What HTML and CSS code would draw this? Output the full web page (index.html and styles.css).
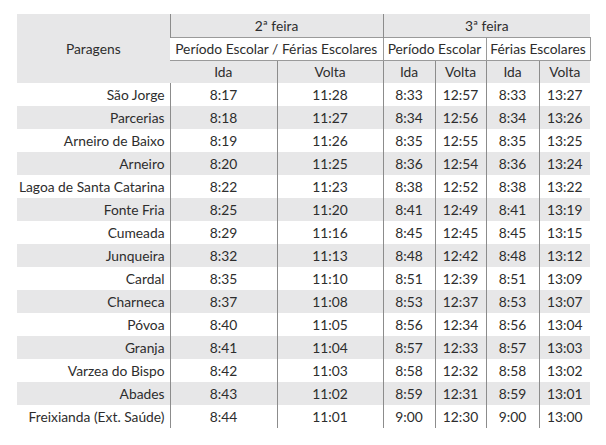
FILE: index.html
```html
<!DOCTYPE html>
<html>
<head>
<meta charset="utf-8">
<link rel="stylesheet" href="styles.css">
</head>
<body>
<table class="timetable">
<colgroup>
<col class="c-stop"><col class="c-wide"><col class="c-wide2"><col class="c-n1"><col class="c-n2"><col class="c-n3"><col class="c-n4">
</colgroup>
<thead>
<tr class="h-day">
<th rowspan="3" class="stop-head">Paragens</th>
<th colspan="2" class="day">2ª feira</th>
<th colspan="4" class="day">3ª feira</th>
</tr>
<tr class="h-period">
<th colspan="2">Período Escolar / Férias Escolares</th>
<th colspan="2">Período Escolar</th>
<th colspan="2">Férias Escolares</th>
</tr>
<tr class="h-dir">
<th>Ida</th><th>Volta</th><th>Ida</th><th>Volta</th><th>Ida</th><th>Volta</th>
</tr>
</thead>
<tbody>
<tr><td class="stop">São Jorge</td><td>8:17</td><td>11:28</td><td>8:33</td><td>12:57</td><td>8:33</td><td>13:27</td></tr>
<tr><td class="stop">Parcerias</td><td>8:18</td><td>11:27</td><td>8:34</td><td>12:56</td><td>8:34</td><td>13:26</td></tr>
<tr><td class="stop">Arneiro de Baixo</td><td>8:19</td><td>11:26</td><td>8:35</td><td>12:55</td><td>8:35</td><td>13:25</td></tr>
<tr><td class="stop">Arneiro</td><td>8:20</td><td>11:25</td><td>8:36</td><td>12:54</td><td>8:36</td><td>13:24</td></tr>
<tr><td class="stop">Lagoa de Santa Catarina</td><td>8:22</td><td>11:23</td><td>8:38</td><td>12:52</td><td>8:38</td><td>13:22</td></tr>
<tr><td class="stop">Fonte Fria</td><td>8:25</td><td>11:20</td><td>8:41</td><td>12:49</td><td>8:41</td><td>13:19</td></tr>
<tr><td class="stop">Cumeada</td><td>8:29</td><td>11:16</td><td>8:45</td><td>12:45</td><td>8:45</td><td>13:15</td></tr>
<tr><td class="stop">Junqueira</td><td>8:32</td><td>11:13</td><td>8:48</td><td>12:42</td><td>8:48</td><td>13:12</td></tr>
<tr><td class="stop">Cardal</td><td>8:35</td><td>11:10</td><td>8:51</td><td>12:39</td><td>8:51</td><td>13:09</td></tr>
<tr><td class="stop">Charneca</td><td>8:37</td><td>11:08</td><td>8:53</td><td>12:37</td><td>8:53</td><td>13:07</td></tr>
<tr><td class="stop">Póvoa</td><td>8:40</td><td>11:05</td><td>8:56</td><td>12:34</td><td>8:56</td><td>13:04</td></tr>
<tr><td class="stop">Granja</td><td>8:41</td><td>11:04</td><td>8:57</td><td>12:33</td><td>8:57</td><td>13:03</td></tr>
<tr><td class="stop">Varzea do Bispo</td><td>8:42</td><td>11:03</td><td>8:58</td><td>12:32</td><td>8:58</td><td>13:02</td></tr>
<tr><td class="stop">Abades</td><td>8:43</td><td>11:02</td><td>8:59</td><td>12:31</td><td>8:59</td><td>13:01</td></tr>
<tr><td class="stop">Freixianda (Ext. Saúde)</td><td>8:44</td><td>11:01</td><td>9:00</td><td>12:30</td><td>9:00</td><td>13:00</td></tr>
</tbody>
</table>
</body>
</html>
```
FILE: styles.css
```css
html, body {
  margin: 0;
  padding: 0;
  background: #ffffff;
}
body {
  padding: 14px 0 0 17px;
  font-family: Lato, "Liberation Sans", sans-serif;
  font-size: 13.8px;
  color: #2d2d2d;
}
.timetable {
  border-collapse: collapse;
  table-layout: fixed;
  width: 573px;
}
.c-stop { width: 153px; }
.c-wide { width: 107px; }
.c-wide2 { width: 106px; }
.c-n1 { width: 52px; }
.c-n2 { width: 51px; }
.c-n3 { width: 53px; }
.c-n4 { width: 51px; }
.timetable th,
.timetable td {
  height: 23px;
  padding: 0;
  box-sizing: border-box;
  font-weight: normal;
  text-align: center;
  white-space: nowrap;
  border-left: 1px solid #8c8c8c;
}
.timetable th:first-child,
.timetable td:first-child {
  border-left: none;
}
.stop-head {
  background: #e7e7e8;
}
.h-day th {
  background: #e7e7e8;
}
.h-period th {
  background: #ffffff;
  border: 1px solid #9a9a9a;
}
.h-dir th {
  background: #e7e7e8;
}
.timetable td.stop {
  text-align: right;
  padding-right: 5px;
}
tbody tr:nth-child(even) td {
  background: #e7e7e8;
}
```
